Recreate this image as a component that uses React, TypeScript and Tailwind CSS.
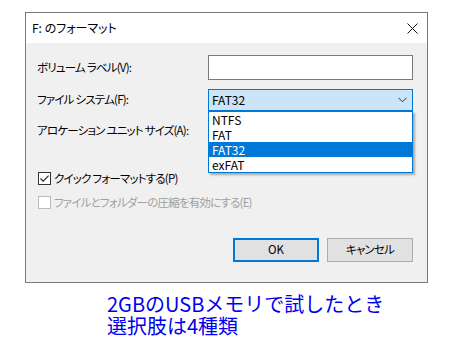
import React from "react";

const ui = "[font-family:'Noto_Sans_CJK_JP','Noto_Sans',sans-serif]";
const palt = "[font-feature-settings:'palt']";

const options = ["NTFS", "FAT", "FAT32", "exFAT"];

function Chevron() {
  return (
    <svg width="9" height="6" viewBox="0 0 9 6" className="shrink-0">
      <path d="M0.5 0.8 L4.5 4.8 L8.5 0.8" fill="none" stroke="#333" strokeWidth="1" />
    </svg>
  );
}

function Checkbox({ checked, disabled }: { checked?: boolean; disabled?: boolean }) {
  return (
    <span
      className={`flex h-[13px] w-[13px] shrink-0 items-center justify-center border bg-white ${
        disabled ? "border-[#bcbcbc]" : "border-[#333]"
      }`}
    >
      {checked && (
        <svg width="11" height="11" viewBox="0 0 11 11">
          <path d="M1.5 5.5 L4.2 8.2 L9.6 2.6" fill="none" stroke="#222" strokeWidth="1.1" />
        </svg>
      )}
    </span>
  );
}

export default function App() {
  return (
    <div className={`h-[350px] w-[454px] bg-white text-black ${ui}`}>
      <div className="flex flex-col pt-[12px]">
        <div className="ml-[25px] flex h-[271px] w-[403px] flex-col border border-[#7a7a7a] bg-[#f0f0f0]">
          <div className="flex h-[30px] items-center justify-between bg-white pl-[6px] pr-[9px]">
            <span className={`text-[12px] leading-none ${palt}`}>F: のフォーマット</span>
            <svg width="11" height="11" viewBox="0 0 11 11">
              <path d="M0.5 0.5 L10.5 10.5 M10.5 0.5 L0.5 10.5" stroke="#111" strokeWidth="1" />
            </svg>
          </div>

          <div className={`flex flex-col pl-[11px] pr-[13px] pt-[12px] text-[11.5px] leading-none tracking-[-0.8px] ${palt}`}>
            <div className="flex h-[25px] items-center">
              <span className="w-[171px] shrink-0 whitespace-nowrap">ボリューム ラベル(V):</span>
              <div className="h-[25px] w-[205px] border border-[#7a7a7a] bg-white" />
            </div>

            <div className="mt-[9px] flex h-[22px] items-center">
              <span className="w-[171px] shrink-0 whitespace-nowrap">ファイル システム(F):</span>
              <div className="relative text-[12px] tracking-normal">
                <div className="flex h-[22px] w-[205px] items-center justify-between border border-[#0078d7] bg-[#cce4f7] pl-[3px] pr-[5px]">
                  <span>FAT32</span>
                  <Chevron />
                </div>
                <ul className="absolute left-0 top-[22px] z-10 w-[205px] border border-[#0078d7] bg-white shadow-[2px_2px_2px_rgba(0,0,0,0.3)]">
                  {options.map((o) => (
                    <li
                      key={o}
                      className={`flex h-[15px] items-center pl-[3px] ${
                        o === "FAT32" ? "bg-[#0078d7] text-white" : ""
                      }`}
                    >
                      {o}
                    </li>
                  ))}
                </ul>
              </div>
            </div>

            <div className="mt-[9px] flex h-[22px] items-center">
              <span className="w-[171px] shrink-0 whitespace-nowrap">アロケーション ユニット サイズ(A):</span>
              <div className="h-[22px] w-[205px] border border-[#adadad] bg-[#e1e1e1]" />
            </div>

            <label className="ml-[1px] mt-[30px] flex h-[13px] items-center gap-[3px]">
              <Checkbox checked />
              <span className="whitespace-nowrap">クイック フォーマットする(P)</span>
            </label>

            <label className="ml-[1px] mt-[11px] flex h-[13px] items-center gap-[3px] text-[#a0a0a0]">
              <Checkbox disabled />
              <span className="whitespace-nowrap">ファイルとフォルダーの圧縮を有効にする(E)</span>
            </label>

            <div className="mt-[29px] flex justify-end gap-[8px] pr-[1px]">
              <button className="flex h-[24px] w-[86px] items-center justify-center border-2 border-[#0078d7] bg-[#e1e1e1] tracking-normal">
                OK
              </button>
              <button className="flex h-[24px] w-[86px] items-center justify-center border border-[#adadad] bg-[#e1e1e1]">
                キャンセル
              </button>
            </div>
          </div>
        </div>

        <div className="ml-[107px] mt-[10px] text-[20px] leading-[22px] text-[#0000ee]">
          <p>2GBのUSBメモリで試したとき</p>
          <p>選択肢は4種類</p>
        </div>
      </div>
    </div>
  );
}
